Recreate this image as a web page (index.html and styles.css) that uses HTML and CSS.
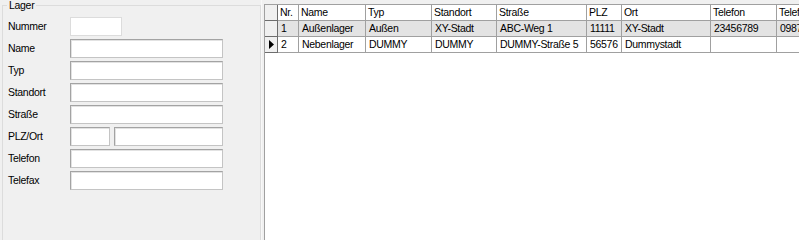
FILE: index.html
```html
<!DOCTYPE html>
<html lang="de">
<head>
<meta charset="utf-8">
<title>Lager</title>
<link rel="stylesheet" href="styles.css">
</head>
<body>
<div class="window">
  <div class="left">
    <div class="group">
      <div class="group-title">Lager</div>
      <div class="form">
        <label class="lbl">Nummer</label>
        <div class="row"><input class="box box-num" type="text" readonly></div>
        <label class="lbl">Name</label>
        <div class="row"><input class="box box-wide" type="text"></div>
        <label class="lbl">Typ</label>
        <div class="row"><input class="box box-wide" type="text"></div>
        <label class="lbl">Standort</label>
        <div class="row"><input class="box box-wide" type="text"></div>
        <label class="lbl">Straße</label>
        <div class="row"><input class="box box-wide" type="text"></div>
        <label class="lbl">PLZ/Ort</label>
        <div class="row"><input class="box box-plz" type="text"><input class="box box-ort" type="text"></div>
        <label class="lbl">Telefon</label>
        <div class="row"><input class="box box-wide" type="text"></div>
        <label class="lbl">Telefax</label>
        <div class="row"><input class="box box-wide" type="text"></div>
      </div>
    </div>
  </div>
  <div class="splitter"></div>
  <div class="right">
    <div class="grid">
      <div class="cell ind head"></div>
      <div class="cell head">Nr.</div>
      <div class="cell head">Name</div>
      <div class="cell head">Typ</div>
      <div class="cell head">Standort</div>
      <div class="cell head">Straße</div>
      <div class="cell head">PLZ</div>
      <div class="cell head">Ort</div>
      <div class="cell head">Telefon</div>
      <div class="cell head">Telefax</div>

      <div class="cell ind"></div>
      <div class="cell alt">1</div>
      <div class="cell alt">Außenlager</div>
      <div class="cell alt">Außen</div>
      <div class="cell alt">XY-Stadt</div>
      <div class="cell alt">ABC-Weg 1</div>
      <div class="cell alt">11111</div>
      <div class="cell alt">XY-Stadt</div>
      <div class="cell alt">23456789</div>
      <div class="cell alt">0987654321</div>

      <div class="cell ind"><svg class="arrow" width="5" height="9" viewBox="0 0 5 9"><polygon points="0,0 5,4.5 0,9" fill="#000"/></svg></div>
      <div class="cell">2</div>
      <div class="cell">Nebenlager</div>
      <div class="cell">DUMMY</div>
      <div class="cell">DUMMY</div>
      <div class="cell">DUMMY-Straße 5</div>
      <div class="cell">56576</div>
      <div class="cell">Dummystadt</div>
      <div class="cell"></div>
      <div class="cell"></div>
    </div>
  </div>
</div>
</body>
</html>
```

FILE: styles.css
```css
* { box-sizing: border-box; }
html, body {
  margin: 0;
  padding: 0;
  height: 100%;
  overflow: hidden;
}
body {
  background: #f0f0f0;
  font-family: "Liberation Sans", Arial, sans-serif;
  font-size: 10.5px;
  letter-spacing: -0.3px;
  color: #000;
}
.window {
  display: flex;
  height: 100vh;
  min-height: 200px;
  overflow: hidden;
}
.left {
  width: 261px;
  flex: none;
  padding-left: 2px;
  overflow: hidden;
}
.group {
  margin-top: 5px;
  border: 1px solid #dcdcdc;
  border-bottom: none;
  height: 100%;
  width: 259px;
}
.group-title {
  width: fit-content;
  margin: -7px 0 0 4px;
  padding: 0 2px;
  line-height: 13px;
  background: #f0f0f0;
}
.form {
  margin-top: 5px;
  padding-left: 5px;
  display: grid;
  grid-template-columns: 62px 1fr;
  row-gap: 3px;
  align-items: center;
}
.lbl {
  line-height: 19px;
}
.row {
  display: flex;
  gap: 4px;
}
.box {
  margin: 0;
  height: 19px;
  padding: 0 2px;
  font: inherit;
  background: #fff;
  border: 1px solid;
  border-color: #a3a3a3 #c4c4c4 #c4c4c4 #a3a3a3;
  box-shadow: inset 1px 1px 0 #e2e2e2;
  outline: none;
}
.box-wide { width: 153px; }
.box-num {
  width: 52px;
  border-color: #dcdcdc;
  box-shadow: none;
}
.box-plz { width: 40px; }
.box-ort { width: 109px; }
.splitter {
  width: 3px;
  flex: none;
  border-left: 1px solid #f8f8f8;
}
.right {
  flex: 1;
  display: flex;
  overflow: hidden;
  padding-top: 4px;
}
.grid {
  display: grid;
  grid-template-columns: 13px 21px 67px 66px 65px 90px 35px 89px 66px 100px;
  grid-auto-rows: 16px;
  align-content: start;
  flex: none;
  width: 700px;
  background: #fff;
  border-top: 1px solid #a0a0a0;
  border-left: 1px solid #a0a0a0;
}
.cell {
  border-right: 1px solid #a0a0a0;
  border-bottom: 1px solid #a0a0a0;
  padding-left: 3px;
  line-height: 15px;
  white-space: nowrap;
  overflow: hidden;
}
.head {
  background: #fff;
  padding-left: 2px;
}
.alt {
  background: #e3e3e3;
}
.ind {
  background: #f0f0f0;
  padding: 0;
  border-right-color: #6d6d6d;
  border-bottom-color: #6d6d6d;
  display: flex;
  align-items: center;
  justify-content: center;
}
.arrow {
  display: block;
  margin-left: 1px;
}
```
